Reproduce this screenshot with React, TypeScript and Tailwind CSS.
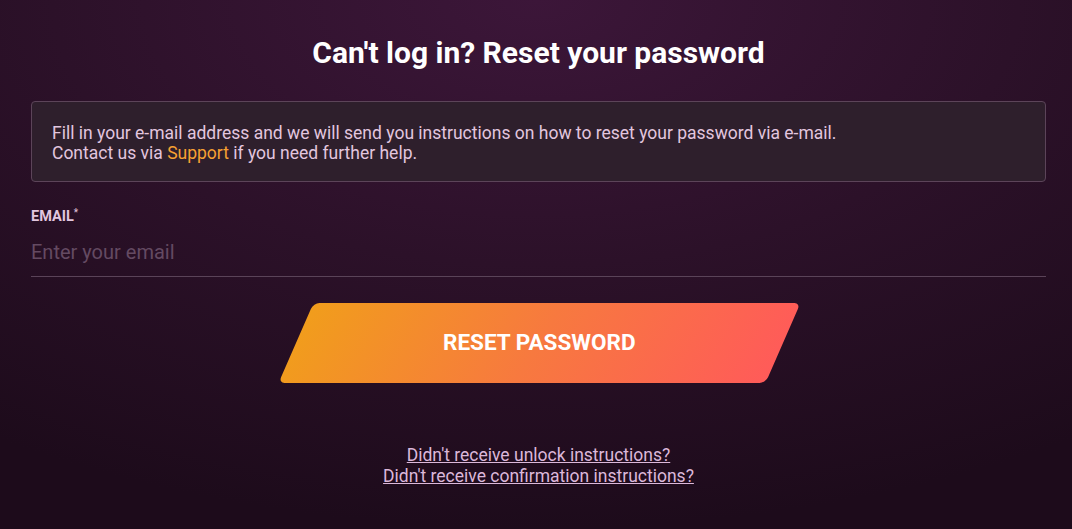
export default function App() {
  return (
    <div
      className="min-h-screen w-full bg-[radial-gradient(ellipse_90%_100%_at_50%_0%,#3c1639_0%,#2c1129_50%,#1d0b1b_100%)] pl-[31px] pr-[26px] text-[#e2c6df]"
      style={{ fontFamily: "Roboto, 'Liberation Sans', sans-serif" }}
    >
      <h1 className="pt-[35px] text-center text-[30px] font-bold leading-[36px] text-white">
        Can't log in? Reset your password
      </h1>

      <div className="mt-[30px] rounded-[4px] border border-[#5c4459] bg-[#2e1f2c] pl-[20px] pr-4 pt-[21px] pb-[18px] text-[17.5px] leading-[20px]">
        <p>
          Fill in your e-mail address and we will send you instructions on how to reset your password via e-mail.
        </p>
        <p>
          Contact us via <a className="text-[#f7a132]">Support</a> if you need further help.
        </p>
      </div>

      <label className="mt-[27px] block text-[14.5px] font-bold leading-[16px] text-[#e2c6df]">
        EMAIL<sup className="text-[10px] font-normal">*</sup>
      </label>
      <input
        type="email"
        placeholder="Enter your email"
        className="mt-[6px] block h-[46px] w-full border-b border-[#5a4358] bg-transparent pb-[3px] text-[20px] text-white outline-none placeholder:text-[#644a62]"
      />

      <div className="mt-[26px] flex justify-center pl-[1px]">
        <button className="flex h-[80px] w-[487px] -skew-x-[23.6deg] items-center justify-center rounded-[6px] bg-[linear-gradient(100deg,#f19d1c_0%,#f7793f_50%,#ff5b59_100%)]">
          <span className="skew-x-[23.6deg] text-[22.5px] font-bold text-white">RESET PASSWORD</span>
        </button>
      </div>

      <div className="mt-[62px] flex flex-col items-center text-[17.5px] leading-[21px] text-[#dcb8da]">
        <a className="underline">Didn't receive unlock instructions?</a>
        <a className="underline">Didn't receive confirmation instructions?</a>
      </div>
    </div>
  );
}
